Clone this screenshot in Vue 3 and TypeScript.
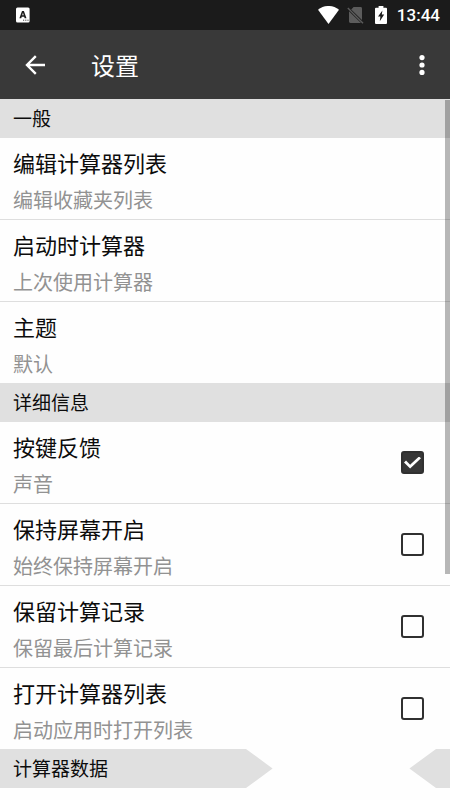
<script setup lang="ts">
import { reactive } from 'vue'

interface Setting {
  id: string
  title: string
  summary: string
  checked?: boolean
}

interface Section {
  heading: string
  items: Setting[]
}

const sections = reactive<Section[]>([
  {
    heading: '一般',
    items: [
      { id: 'edit-list', title: '编辑计算器列表', summary: '编辑收藏夹列表' },
      { id: 'startup', title: '启动时计算器', summary: '上次使用计算器' },
      { id: 'theme', title: '主题', summary: '默认' },
    ],
  },
  {
    heading: '详细信息',
    items: [
      { id: 'feedback', title: '按键反馈', summary: '声音', checked: true },
      { id: 'keep-screen', title: '保持屏幕开启', summary: '始终保持屏幕开启', checked: false },
      { id: 'keep-record', title: '保留计算记录', summary: '保留最后计算记录', checked: false },
      { id: 'open-list', title: '打开计算器列表', summary: '启动应用时打开列表', checked: false },
    ],
  },
])
</script>

<template>
  <div class="screen">
    <div class="status">
      <svg class="ime" width="14" height="16" viewBox="0 0 14 16" aria-hidden="true">
        <rect y=".5" width="13.6" height="15" rx="1.5" fill="#fff" />
        <path d="M3.4 11.2 6 4H7.9L10.5 11.2H8.6L8.2 9.8H5.7L5.3 11.2ZM6.2 8.2H7.7L6.95 5.8Z" fill="#1b1b1b" fill-rule="evenodd" />
        <path d="M7 13.2h1.2M9.2 13.2h1.2M11.4 13.2h1.2" stroke="#444" stroke-width="1" />
      </svg>
      <div class="indicators">
        <svg width="21" height="18" viewBox="0 0 22 18" preserveAspectRatio="none" aria-hidden="true">
          <path d="M0 3.8C6.3-1.3 15.7-1.3 22 3.8L11 18Z" fill="#fff" />
        </svg>
        <svg class="sim" width="17" height="18" viewBox="0 0 17 18" aria-hidden="true">
          <path d="M6.6 1H13.6Q15 1 15 2.4V14L4.2 3.4ZM2 5.2 14 17H3.4Q2 17 2 15.6Z" fill="#5c5c5c" />
          <path d="M.8 2 16 17.2" stroke="#5c5c5c" stroke-width="1.4" />
        </svg>
        <svg class="battery" width="12" height="18" viewBox="0 0 12 18" aria-hidden="true">
          <path d="M3.6 0H8.4V1.8H11Q12 1.8 12 2.8V17Q12 18 11 18H1Q0 18 0 17V2.8Q0 1.8 1 1.8H3.6Z" fill="#fff" />
          <path d="M7.4 4.4 3 10.6H5.4L4.8 15.2 9.2 8.6H6.8Z" fill="#1b1b1b" />
        </svg>
        <span class="clock">13:44</span>
      </div>
    </div>

    <header class="appbar">
      <button class="icon-button" type="button" aria-label="返回">
        <svg width="20" height="20" viewBox="0 0 20 20" aria-hidden="true">
          <path d="M20 10H2.2M10.8 1.2 2 10l8.8 8.8" fill="none" stroke="#fff" stroke-width="2.4" />
        </svg>
      </button>
      <h1>设置</h1>
      <button class="icon-button" type="button" aria-label="更多选项">
        <svg width="6" height="20" viewBox="0 0 6 20" aria-hidden="true">
          <g fill="#fff">
            <circle cx="3" cy="2.6" r="2.6" />
            <circle cx="3" cy="10" r="2.6" />
            <circle cx="3" cy="17.4" r="2.6" />
          </g>
        </svg>
      </button>
    </header>

    <main>
      <section v-for="section in sections" :key="section.heading">
        <h2>{{ section.heading }}</h2>
        <ul>
          <li v-for="item in section.items" :key="item.id">
            <label v-if="item.checked !== undefined" class="row" :for="item.id">
              <span class="text">
                <span class="title">{{ item.title }}</span>
                <span class="summary">{{ item.summary }}</span>
              </span>
              <input :id="item.id" v-model="item.checked" type="checkbox" />
            </label>
            <button v-else class="row" type="button">
              <span class="text">
                <span class="title">{{ item.title }}</span>
                <span class="summary">{{ item.summary }}</span>
              </span>
            </button>
          </li>
        </ul>
      </section>
      <section class="data">
        <h2>计算器数据</h2>
        <div class="patch"></div>
      </section>
      <div class="scrollbar"></div>
    </main>
  </div>
</template>

<style>
body {
  background: #fefefe;
}
</style>

<style scoped>
.screen {
  font-family: Roboto, "Noto Sans CJK SC", sans-serif;
  color: #0c0c0c;
  background: #fefefe;
}

.status {
  display: flex;
  align-items: center;
  justify-content: space-between;
  height: 30px;
  padding: 0 10px 0 16px;
  background: #1b1b1b;
}

.indicators {
  display: flex;
  align-items: center;
}

.sim {
  margin-left: 8px;
}

.battery {
  margin-left: 11px;
}

.clock {
  margin-left: 10px;
  padding-top: 1px;
  color: #fff;
  font-size: 17px;
  font-weight: 500;
  line-height: 29px;
}

.appbar {
  display: flex;
  align-items: center;
  height: 69px;
  padding: 0 8px 0 15px;
  background: #393939;
}

.icon-button {
  display: flex;
  align-items: center;
  justify-content: center;
  width: 40px;
  height: 40px;
  padding: 0;
  border: 0;
  background: none;
}

h1 {
  flex: 1;
  margin: 0 0 0 36px;
  padding-top: 4px;
  color: #fff;
  font-size: 24px;
  font-weight: 400;
  line-height: 40px;
}

main {
  position: relative;
}

h2 {
  margin: 0;
  padding: 2px 13px 0;
  background: #e0e0e0;
  font-size: 19px;
  font-weight: 400;
  line-height: 37px;
}

ul {
  margin: 0;
  padding: 0;
  list-style: none;
}

li + li {
  border-top: 1px solid #dedede;
}

.row {
  display: flex;
  align-items: center;
  justify-content: space-between;
  box-sizing: border-box;
  width: 100%;
  padding: 9px 26px 0 13px;
  border: 0;
  background: none;
  color: inherit;
  font-family: inherit;
  text-align: left;
}

.text {
  display: flex;
  flex-direction: column;
}

.title,
.summary {
  line-height: 36px;
}

.title {
  font-size: 22px;
}

.summary {
  color: #929292;
  font-size: 20px;
}

input {
  appearance: none;
  flex: none;
  width: 23px;
  height: 23px;
  margin: 0 0 9px;
  border: 2px solid #303030;
  border-radius: 3px;
  background: #fefefe;
}

input:checked {
  display: grid;
  place-items: center;
  background: #373737;
}

input:checked::before {
  content: "";
  width: 17px;
  height: 12px;
  background: #fff;
  clip-path: polygon(0 50%, 12% 34%, 36% 68%, 88% 0, 100% 15%, 36% 100%);
}

.data {
  display: flex;
  background: #e0e0e0;
}

.data h2 {
  flex: 1;
}

.patch {
  width: 190px;
  margin-right: 14px;
  background: #fefefe;
  clip-path: polygon(0 0, 100% 0, 86% 50%, 100% 100%, 0 100%, 14% 50%);
}

.scrollbar {
  position: absolute;
  top: 1px;
  right: 0;
  width: 5px;
  height: 474px;
  background: rgba(0, 0, 0, 0.28);
}
</style>
